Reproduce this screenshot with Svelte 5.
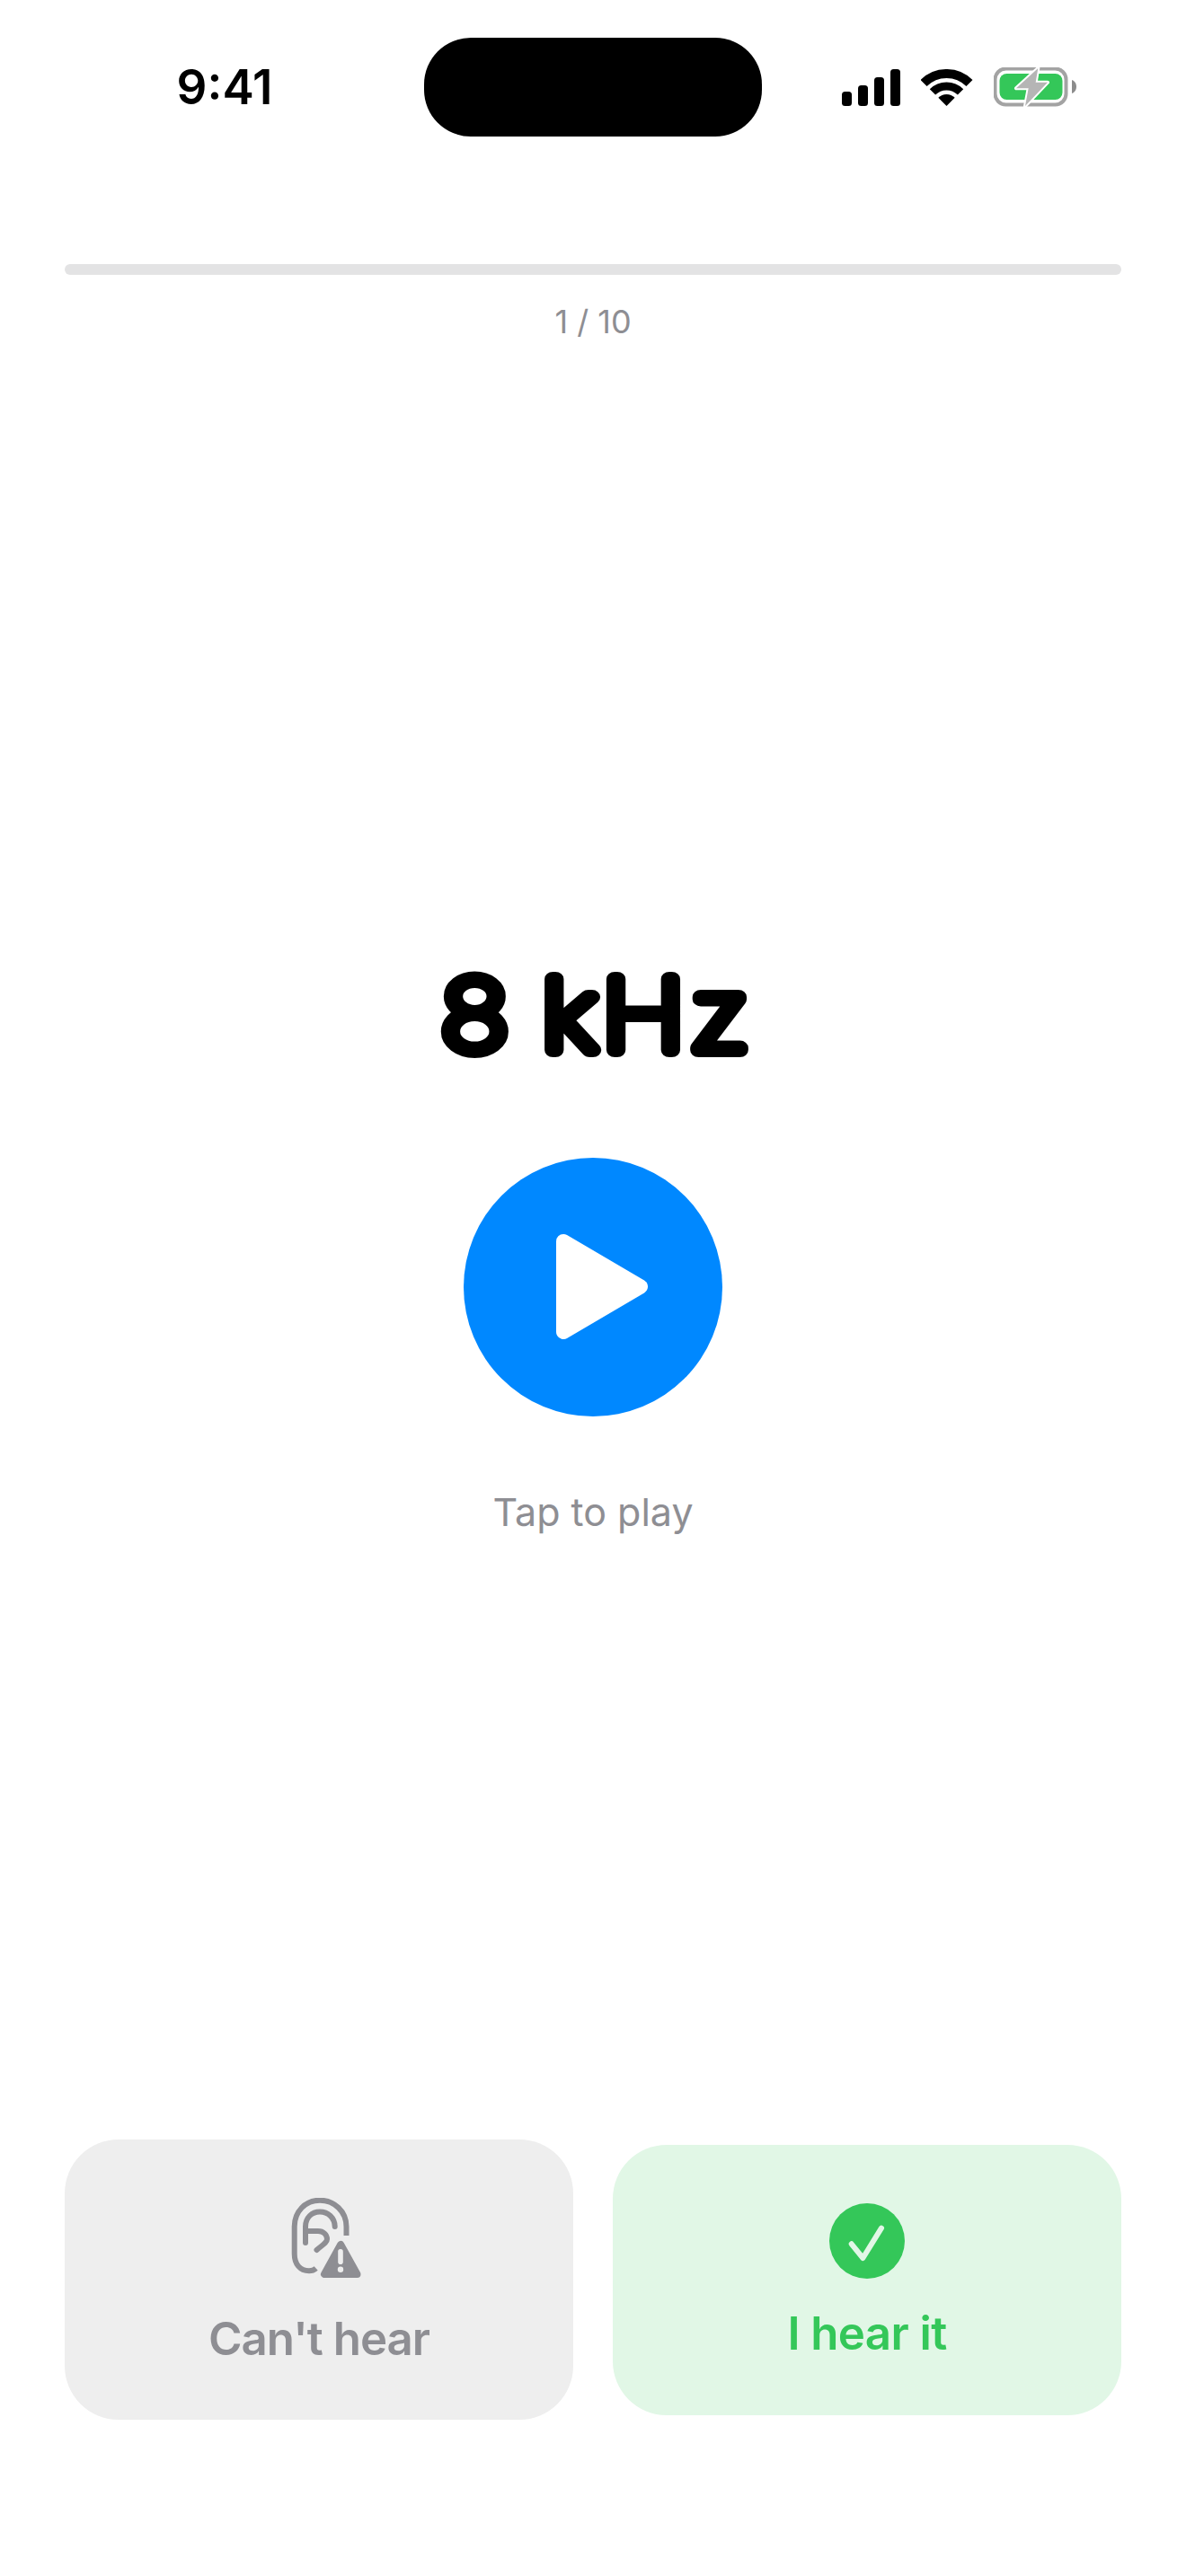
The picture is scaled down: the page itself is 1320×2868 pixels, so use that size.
<script lang="ts">
	let step = $state(1);
	const total = 10;
	const frequency = '8 kHz';
	let playing = $state(false);
	let progress = $derived(playing ? (step / total) * 100 : 0);
</script>

<div class="screen">
	<header class="status">
		<span class="time">9:41</span>
		<div class="island"></div>
		<div class="indicators">
			<svg class="signal" width="65" height="41" viewBox="0 0 65 41" fill="#000">
				<rect x="0" y="25" width="11" height="16" rx="3.5" />
				<rect x="18" y="18" width="11" height="23" rx="3.5" />
				<rect x="36" y="9" width="11" height="32" rx="3.5" />
				<rect x="54" y="0" width="11" height="41" rx="3.5" />
			</svg>
			<svg class="wifi" width="58" height="41" viewBox="0 0 58 41" fill="none" stroke="#000">
				<path d="M3.04 15.54A36 36 0 0 1 53.96 15.54" stroke-width="10" />
				<path d="M12.94 25.44A22 22 0 0 1 44.06 25.44" stroke-width="9" />
				<path d="M28.5 41 19.3 31.8A13 13 0 0 1 37.7 31.8Z" fill="#000" stroke="none" />
			</svg>
			<svg class="battery" width="92" height="44" viewBox="0 0 92 44">
				<rect x="1.5" y="1.5" width="79" height="40" rx="12" fill="none" stroke="#a3a3a3" stroke-width="4" />
				<rect x="6.5" y="7" width="70" height="29" rx="8" fill="#34c759" />
				<path d="M87 14c3 1 5 4 5 7.500s-2 6.500-5 7.500Z" fill="#8c8c8c" />
				<path
					d="M49.300 1 25 23.300H38.700L35 43 60 16.700H46.700Z"
					fill="#b5b5b5"
					stroke="#fff"
					stroke-width="4"
					stroke-linejoin="round"
					paint-order="stroke"
				/>
			</svg>
		</div>
	</header>

	<section class="progress">
		<div class="track"><div class="fill" style="width: {progress}%"></div></div>
		<span class="count">{step} / {total}</span>
	</section>

	<main class="tone">
		<!-- a thin weight under a wide round-joined stroke gives the rounded letterforms -->
		<svg class="frequency" width="600" height="156" viewBox="0 0 600 156" role="heading" aria-level="1">
			<text x="131" y="116" textLength="348" lengthAdjust="spacingAndGlyphs">{frequency}</text>
		</svg>
		<button class="play" aria-label="Play tone" onclick={() => (playing = !playing)}>
			<svg width="102" height="117" viewBox="0 0 102 117">
				<path
					d="M8 8 94 58.500 8 109Z"
					fill="#fff"
					stroke="#fff"
					stroke-width="16"
					stroke-linejoin="round"
				/>
			</svg>
		</button>
		<p class="hint">Tap to play</p>
	</main>

	<footer class="answers">
		<button class="answer no" onclick={() => step < total && step++}>
			<svg class="ear" width="93" height="95" viewBox="9 18 93 95" fill="none" stroke="#8e8e93">
				<path
					d="M85.500 60V50C85.500 33 72 20.700 56 20.700 40 20.700 27.700 33 27.700 50V80C27.700 92 34 99.300 44 99.300 47 99.300 49.500 98.500 51.700 96.500"
					stroke-width="6"
				/>
				<path
					d="M40 68V50C40 40 47 33.500 56 33.500 65 33.500 72.500 40 72.700 50"
					stroke-width="6"
					stroke-linecap="round"
				/>
				<path
					d="M41 55H54C60 55 64 59 64 64 64 68 58 71 52.500 76"
					stroke-width="6"
					stroke-linecap="round"
				/>
				<path d="M79.200 70 61 103H97.500Z" stroke="#eee" stroke-width="15" stroke-linejoin="round" />
				<path d="M79.200 70 61 103H97.500Z" fill="#8e8e93" stroke-width="8" stroke-linejoin="round" />
				<rect x="76.200" y="75" width="5.600" height="17" rx="2.800" fill="#eee" stroke="none" />
				<circle cx="79" cy="97.700" r="3.200" fill="#eee" stroke="none" />
			</svg>
			<span>Can't hear</span>
		</button>
		<button class="answer yes" onclick={() => step < total && step++}>
			<svg width="84" height="84" viewBox="0 0 84 84">
				<circle cx="42" cy="42" r="42" fill="#34c759" />
				<path
					d="M24.700 45.300 37.400 61 58 27.700"
					fill="none"
					stroke="#e1f7e6"
					stroke-width="6"
					stroke-linecap="round"
					stroke-linejoin="round"
				/>
			</svg>
			<span>I hear it</span>
		</button>
	</footer>
</div>

<style>
	:global(body) {
		margin: 0;
		background: #fff;
	}

	.screen {
		display: flex;
		flex-direction: column;
		height: 2868px;
		font-family: Inter, 'Liberation Sans', sans-serif;
		color: #000;
		overflow: hidden;
	}

	.status {
		display: grid;
		grid-template-columns: 472px 376px 1fr;
		align-items: center;
		height: 110px;
		margin-top: 42px;
	}
	.time {
		justify-self: center;
		padding-left: 28px;
		font-size: 53px;
		font-weight: 600;
	}
	.island {
		height: 110px;
		border-radius: 52px;
		background: #000;
	}
	.indicators {
		display: flex;
		align-items: center;
		gap: 23px;
		padding-left: 89px;
	}

	.progress {
		display: flex;
		flex-direction: column;
		align-items: center;
		gap: 30px;
		margin-top: 142px;
		padding: 0 72px;
	}
	.track {
		width: 100%;
		height: 12px;
		border-radius: 6px;
		background: #e3e3e4;
		overflow: hidden;
	}
	.fill {
		height: 100%;
		background: #0088ff;
	}
	.count {
		font-size: 36px;
		line-height: 44px;
		color: #8e8e93;
	}

	.tone {
		flex: 1;
		display: flex;
		flex-direction: column;
		align-items: center;
		justify-content: center;
	}
	.frequency text {
		font-size: 108px;
		font-weight: 100;
		letter-spacing: 5px;
		word-spacing: -8px;
		fill: #000;
		stroke: #000;
		stroke-width: 16px;
		stroke-linejoin: round;
		stroke-linecap: round;
	}
	.play {
		display: flex;
		align-items: center;
		justify-content: center;
		width: 288px;
		height: 288px;
		margin-top: 80px;
		padding: 0 0 0 19px;
		border: 0;
		border-radius: 50%;
		background: #0088ff;
	}
	.hint {
		margin: 79px 0 0;
		font-size: 43px;
		line-height: 54px;
		color: #8e8e93;
	}

	.answers {
		display: flex;
		align-items: center;
		gap: 44px;
		padding: 0 72px 174px;
	}
	.answer {
		flex: 1;
		display: flex;
		flex-direction: column;
		align-items: center;
		padding: 65px 0 57.5px;
		border: 0;
		border-radius: 60px;
		font: inherit;
		font-size: 51px;
		font-weight: 600;
		line-height: 66px;
	}
	.answer span {
		margin-top: 28.5px;
	}
	.no {
		background: #eee;
		color: #8e8e93;
		letter-spacing: -1px;
	}
	.yes {
		background: #e1f7e6;
		color: #34c759;
		letter-spacing: -0.6px;
	}
</style>
